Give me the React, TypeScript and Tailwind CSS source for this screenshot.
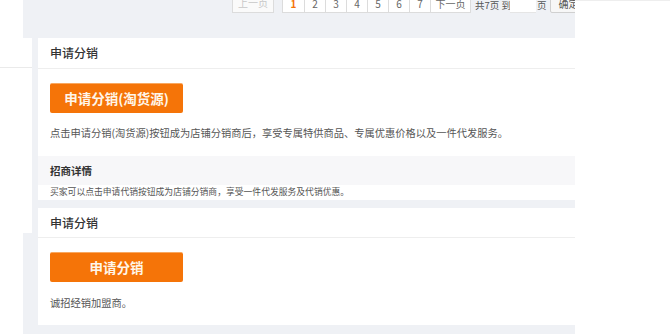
import React from "react";

const font = { fontFamily: '"Noto Sans CJK SC", "Liberation Sans", sans-serif' };

function Pager() {
  const nums = ["1", "2", "3", "4", "5", "6", "7"];
  return (
    <div className="flex w-max items-start ml-[200px] -mt-[13px] h-[26px] text-[10px] leading-[10px]">
      <div className="shrink-0 w-[42px] h-[26px] border border-[#dcdcdc] bg-[#fafafa] text-[#c8c8c8] flex items-end justify-center pb-[4px]">
        上一页
      </div>
      <div className="shrink-0 ml-[8px] flex h-[26px] border border-[#dcdcdc] bg-white">
        {nums.map((n, i) => (
          <div
            key={n}
            className={
              "shrink-0 w-[21px] h-full flex items-end justify-center pb-[3px] " +
              (i > 0 ? "border-l border-[#dcdcdc] " : "") +
              (i === 0 ? "text-[#f57408] font-bold" : "text-[#666]")
            }
          >
            {n}
          </div>
        ))}
        <div className="shrink-0 w-[40px] h-full border-l border-[#dcdcdc] flex items-end justify-center pb-[3px] text-[#666]">
          下一页
        </div>
      </div>
      <div className="shrink-0 ml-[4px] w-[33px] h-[26px] flex items-end pb-[3px] text-[9.5px] text-[#555] whitespace-nowrap">
        共7页 到
      </div>
      <div className="shrink-0 ml-[2px] w-[26px] h-[26px] bg-white border-b border-[#e5e5e5]" />
      <div className="shrink-0 ml-[1px] h-[26px] flex items-end pb-[3px] text-[9.5px] text-[#555]">页</div>
      <div className="shrink-0 ml-[3px] w-[44px] h-[26px] bg-[#f7f7f7] border border-[#d0d0d0] rounded-[2px] flex items-end justify-start pl-[8px] pb-[3px] text-[#555]">
        确定
      </div>
    </div>
  );
}

function OrangeButton({ children }: { children: React.ReactNode }) {
  return (
    <div className="w-[133px] h-[30px] bg-[#f57408] border-t border-[#f9a860] rounded-[2px] flex items-center justify-center text-[#fff6ea] text-[13.5px] font-bold leading-none">
      {children}
    </div>
  );
}

export default function App() {
  return (
    <div className="w-[670px] h-[334px] bg-white flex overflow-hidden" style={font}>
      {/* left column */}
      <div className="w-[32px] flex flex-col shrink-0">
        <div className="h-[38px] flex">
          <div className="w-[23px] bg-white" />
          <div className="flex-1 bg-[#eff1f5]" />
        </div>
        <div className="h-[195px] bg-white">
          <div className="h-[30px] border-b border-[#eaeaea]" />
        </div>
        <div className="flex-1 flex">
          <div className="w-[23px] bg-white" />
          <div className="flex-1 bg-[#eff1f5]" />
        </div>
      </div>

      {/* main gray column */}
      <div className="w-[543px] bg-[#eff1f5] flex flex-col overflow-hidden shrink-0">
        <div className="h-[38px] overflow-visible">
          <Pager />
        </div>
        <div className="pl-[6px] flex flex-col">
          {/* card 1 */}
          <div className="bg-white h-[162px] flex flex-col">
            <div className="h-[31px] border-b border-[#eeeeee] pl-[12px] flex items-center text-[12px] text-[#333] font-medium">
              申请分销
            </div>
            <div className="pl-[12px] pt-[14px]">
              <OrangeButton>申请分销(淘货源)</OrangeButton>
              <div className="mt-[13px] text-[10.25px] leading-[14px] text-[#555] whitespace-nowrap">
                点击申请分销(淘货源)按钮成为店铺分销商后，享受专属特供商品、专属优惠价格以及一件代发服务。
              </div>
            </div>
            <div className="mt-[16px] h-[29px] bg-[#f7f7f9] pl-[12px] flex items-center text-[10.5px] font-bold text-[#333]">
              招商详情
            </div>
            <div className="pl-[12px] h-[15px] flex items-center text-[8.8px] leading-none text-[#555] whitespace-nowrap">
              买家可以点击申请代销按钮成为店铺分销商，享受一件代发服务及代销优惠。
            </div>
          </div>
          {/* card 2 */}
          <div className="mt-[8px] bg-white h-[117px] flex flex-col">
            <div className="h-[30px] border-b border-[#eeeeee] pl-[12px] flex items-center text-[12px] text-[#333] font-medium">
              申请分销
            </div>
            <div className="pl-[12px] pt-[14px]">
              <OrangeButton>申请分销</OrangeButton>
              <div className="mt-[14px] text-[10.25px] leading-[14px] text-[#555] whitespace-nowrap">
                诚招经销加盟商。
              </div>
            </div>
          </div>
        </div>
      </div>

      {/* right white */}
      <div className="flex-1 bg-white border-t border-[#eeeeee]" />
    </div>
  );
}
